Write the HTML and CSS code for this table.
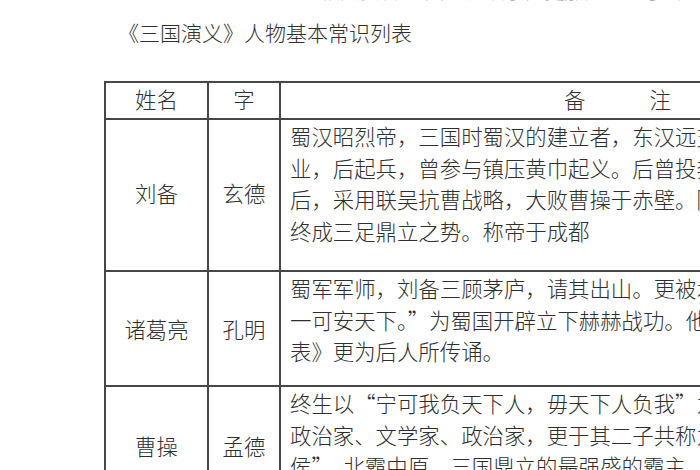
FILE: index.html
```html
<!DOCTYPE html>
<html lang="zh">
<head>
<meta charset="utf-8">
<link rel="stylesheet" href="styles.css">
</head>
<body>
<div class="page">
  <div class="cut"><span class="cut-text">的相关资料 三国人物故事，更加完整的了解三国　　三国演义人物基本常识列表大全</span></div>
  <h1 class="title">《三国演义》人物基本常识列表</h1>
  <table class="grid">
    <colgroup><col class="c1"><col class="c2"><col class="c3"></colgroup>
    <tr class="head">
      <th>姓名</th><th>字</th><th>备&emsp;&emsp;&emsp;注</th>
    </tr>
    <tr class="r1">
      <td class="name">刘备</td><td class="name">玄德</td>
      <td class="note">
        <div class="ln">蜀汉昭烈帝，三国时蜀汉的建立者，东汉远支皇族，少时以贩履织席为</div>
        <div class="ln">业，后起兵，曾参与镇压黄巾起义。后曾投奔公孙瓒、陶谦、曹操等人，赤壁之战</div>
        <div class="ln">后，采用联吴抗曹战略，大败曹操于赤壁。随后夺取荆州、益州，</div>
        <div class="ln">终成三足鼎立之势。称帝于成都</div>
      </td>
    </tr>
    <tr class="r2">
      <td class="name">诸葛亮</td><td class="name">孔明</td>
      <td class="note">
        <div class="ln">蜀军军师，刘备三顾茅庐，请其出山。更被水镜先生称为“卧龙凤雏，得</div>
        <div class="ln">一可安天下。”为蜀国开辟立下赫赫战功。他的《出师</div>
        <div class="ln">表》更为后人所传诵。</div>
      </td>
    </tr>
    <tr class="r3">
      <td class="name">曹操</td><td class="name">孟德</td>
      <td class="note">
        <div class="ln">终生以“宁可我负天下人，毋天下人负我”为人生信条。是三国时期杰出的</div>
        <div class="ln">政治家、文学家、政治家，更于其二子共称为“三曹”。他“挟天子以令诸</div>
        <div class="ln">侯”、北霸中原，三国鼎立的最强盛的霸主。</div>
      </td>
    </tr>
  </table>
</div>
</body>
</html>
```

FILE: styles.css
```css
html, body {
  margin: 0;
  padding: 0;
  background: #ffffff;
  overflow: hidden;
}
.page {
  width: 700px;
  height: 470px;
  overflow: hidden;
  font-family: "Noto Sans CJK SC", "Noto Sans CJK TC", sans-serif;
  font-weight: 300;
  color: #2f2f2f;
}
.cut {
  height: 3px;
  overflow: hidden;
  padding-left: 300px;
  white-space: nowrap;
}
.cut-text {
  display: block;
  margin-top: -19px;
  font-size: 20px;
  line-height: 20px;
  color: #b0b0b0;
}
.title {
  margin: 18px 0 0 118px;
  font-size: 21px;
  line-height: 22px;
  font-weight: 300;
  white-space: nowrap;
  color: #2f2f2f;
}
.grid {
  margin: 38px 0 0 104px;
  width: 852px;
  table-layout: fixed;
  border-collapse: collapse;
  font-size: 21.4px;
}
.c1 { width: 103px; }
.c2 { width: 72px; }
.grid th, .grid td {
  border: 2px solid #474747;
  padding: 0;
  font-weight: 300;
}
.head { height: 37px; }
.head th {
  text-align: center;
  vertical-align: middle;
  line-height: 24px;
  padding-bottom: 3px;
  white-space: nowrap;
}
.r1 { height: 152px; }
.r2 { height: 115px; }
.r3 { height: 118px; }
.name {
  text-align: center;
  vertical-align: middle;
  white-space: nowrap;
}
.r1 .name { padding-bottom: 5px; }
.note {
  vertical-align: top;
  padding: 0 0 0 9px !important;
}
.ln {
  line-height: 31.6px;
  white-space: nowrap;
  overflow: hidden;
}
```
